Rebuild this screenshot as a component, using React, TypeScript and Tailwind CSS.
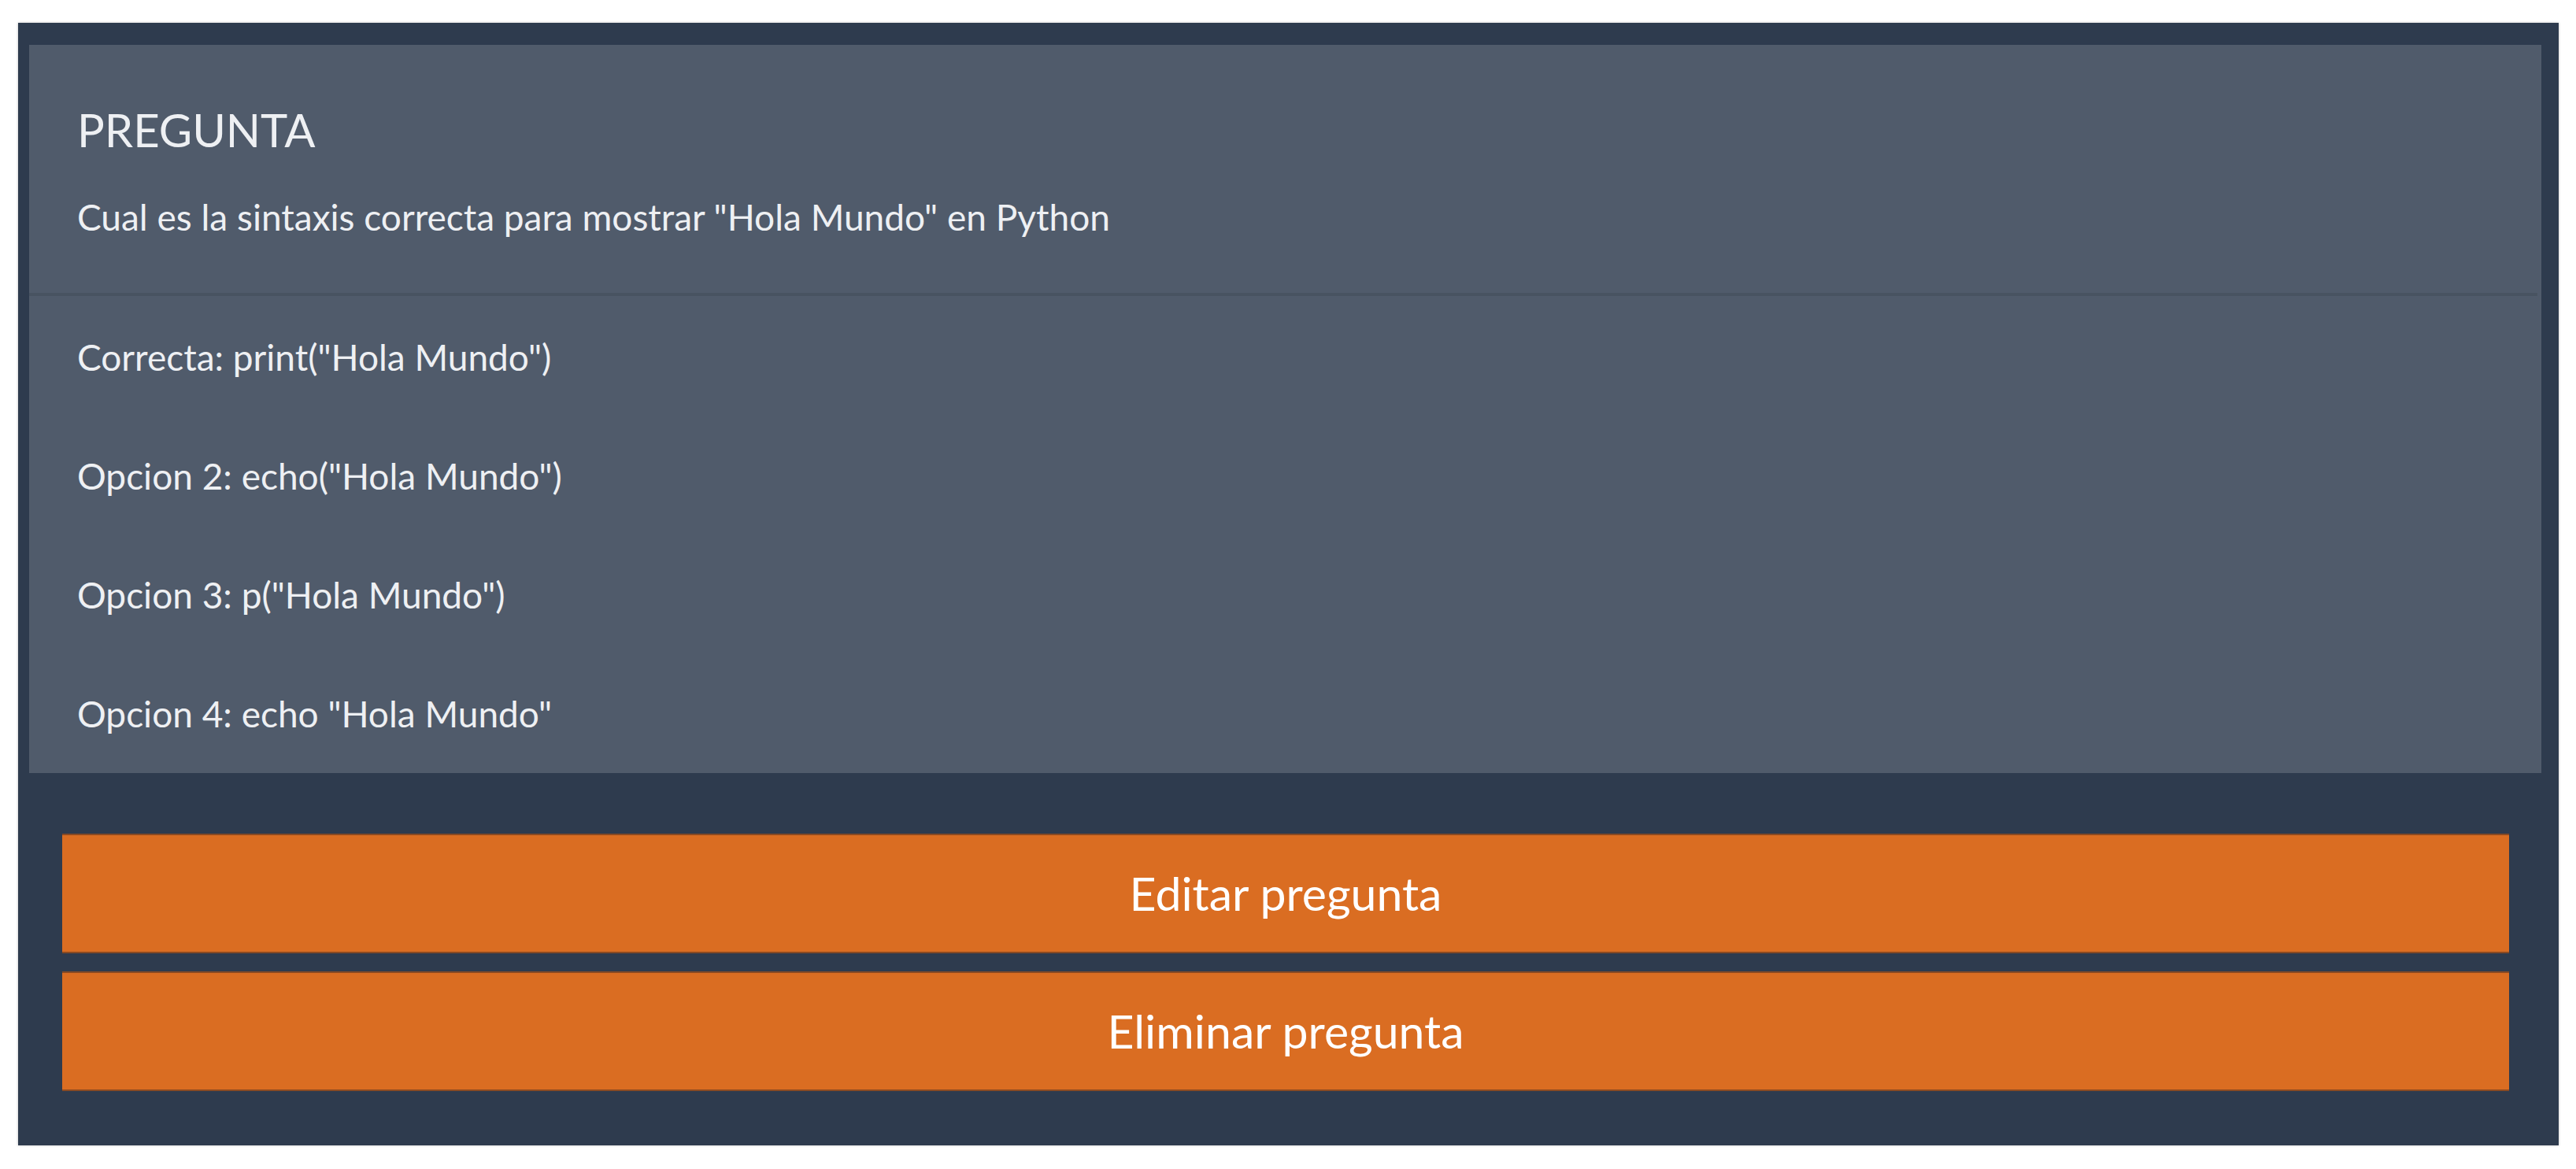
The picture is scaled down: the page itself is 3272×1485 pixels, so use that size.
export default function App() {
  const font = { fontFamily: "Lato, 'Noto Sans', sans-serif" };
  return (
    <div className="min-h-screen bg-white pt-[29px] pl-[23px]" style={font}>
      <div className="w-[3227px] h-[1426px] bg-[#2e3b4e] flex flex-col shadow-[0_0_3px_rgba(0,0,0,0.25)]">
        <div className="ml-[14px] mr-[22px] mt-[28px] h-[925px] bg-[#505b6b] flex flex-col">
          <div className="pl-[61px] pt-[73px] pb-[66px]">
            <div className="text-[58px] leading-[70px] text-[#eef0f3]">PREGUNTA</div>
            <div className="mt-[46px] text-[46px] leading-[60px] text-[#eef0f3]">
              Cual es la sintaxis correcta para mostrar "Hola Mundo" en Python
            </div>
          </div>
          <div className="h-[4px] mr-[5px] bg-[#485361]" />
          <div className="pl-[61px] pt-[48px] flex flex-col gap-[91px] text-[46px] leading-[60px] text-[#eef0f3]">
            <div>Correcta: print("Hola Mundo")</div>
            <div>Opcion 2: echo("Hola Mundo")</div>
            <div>Opcion 3: p("Hola Mundo")</div>
            <div>Opcion 4: echo "Hola Mundo"</div>
          </div>
        </div>
        <div className="ml-[56px] w-[3108px] mt-[77px] flex flex-col gap-[23px]">
          <button className="h-[152px] bg-[#da6d22] text-white text-[59px] border-y-2 border-[#8a4a22]" style={font}>
            Editar pregunta
          </button>
          <button className="h-[152px] bg-[#da6d22] text-white text-[59px] border-y-2 border-[#8a4a22]" style={font}>
            Eliminar pregunta
          </button>
        </div>
      </div>
    </div>
  );
}
